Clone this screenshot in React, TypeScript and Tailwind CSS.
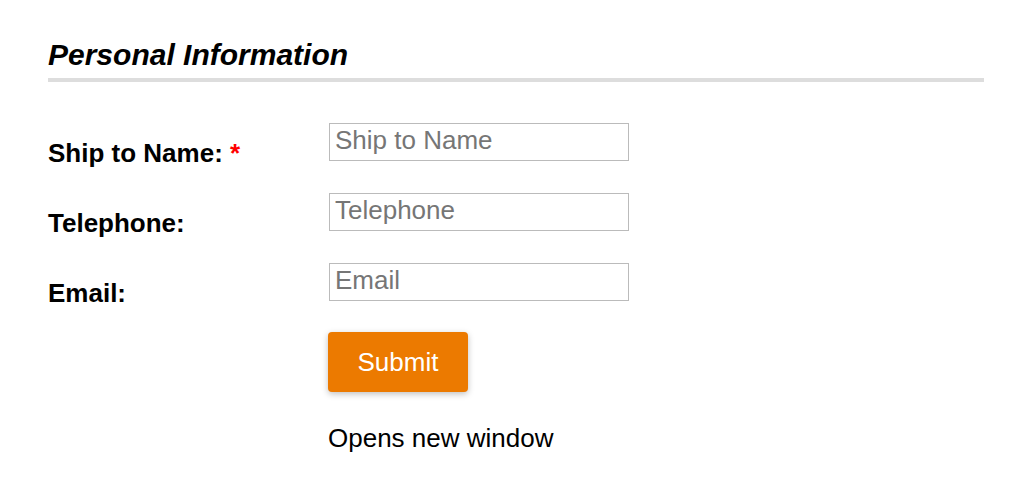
import React from 'react';

function PersonalInformation() {
  return (
    <div className="min-h-screen bg-white pl-12 pr-[50px] pt-[37px] font-['Liberation_Sans',Arial,sans-serif] text-black">
      <h2 className="text-[30px] font-bold italic leading-[36px]">Personal Information</h2>
      <div className="mt-[5px] h-1 w-full bg-[#dddddd]" />

      <div className="mt-[41px] flex flex-col gap-8">
        <div className="flex h-[38px] items-start">
          <label className="mt-[15px] w-[281px] shrink-0 text-[26px] font-bold leading-[30px]">
            Ship to Name: <span className="text-[#ff0000]">*</span>
          </label>
          <input
            className="h-[38px] w-[300px] border border-[#bbbbbb] px-[5px] pb-[4px] text-[26px] outline-none placeholder:text-[#767676]"
            type="text"
            placeholder="Ship to Name"
          />
        </div>
        <div className="flex h-[38px] items-start">
          <label className="mt-[15px] w-[281px] shrink-0 text-[26px] font-bold leading-[30px]">Telephone:</label>
          <input
            className="h-[38px] w-[300px] border border-[#bbbbbb] px-[5px] pb-[4px] text-[26px] outline-none placeholder:text-[#767676]"
            type="text"
            placeholder="Telephone"
          />
        </div>
        <div className="flex h-[38px] items-start">
          <label className="mt-[15px] w-[281px] shrink-0 text-[26px] font-bold leading-[30px]">Email:</label>
          <input
            className="h-[38px] w-[300px] border border-[#bbbbbb] px-[5px] pb-[4px] text-[26px] outline-none placeholder:text-[#767676]"
            type="text"
            placeholder="Email"
          />
        </div>
      </div>

      <div className="ml-[280px] mt-[31px]">
        <button className="h-[60px] w-[140px] rounded-[4px] bg-[#ec7a00] text-[26px] text-white shadow-[0_2px_6px_rgba(0,0,0,0.25)]">
          Submit
        </button>
        <p className="mt-[31px] text-[26px] leading-[30px]">Opens new window</p>
      </div>
    </div>
  );
}

export default function App() {
  return <PersonalInformation />;
}
